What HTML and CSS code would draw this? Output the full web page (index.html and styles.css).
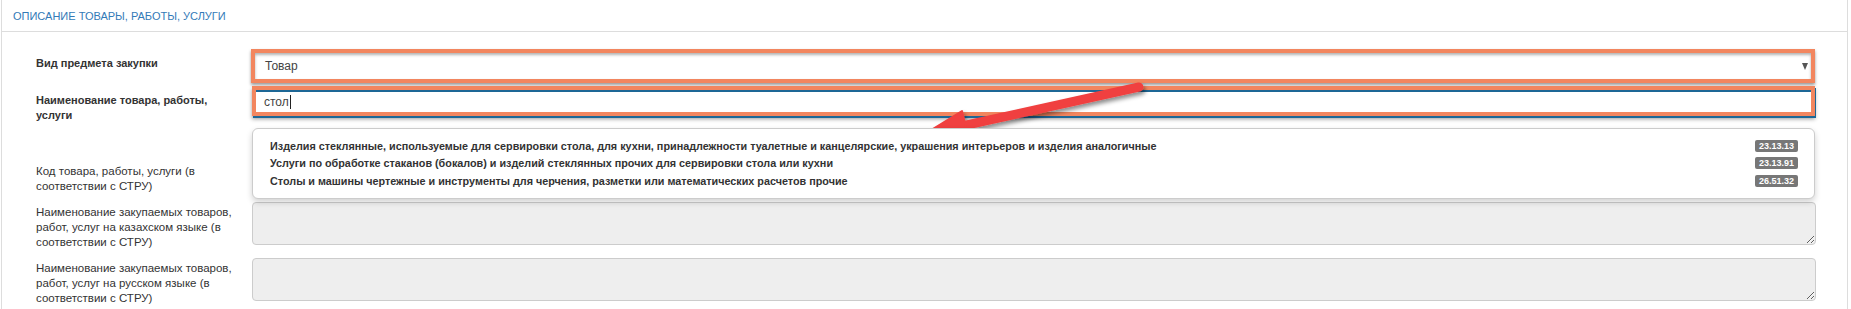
FILE: index.html
```html
<!doctype html>
<html lang="ru">
<head>
<meta charset="utf-8">
<title>Описание товары, работы, услуги</title>
<link rel="stylesheet" href="styles.css">
</head>
<body>
<div class="panel">
  <div class="panel-heading">ОПИСАНИЕ ТОВАРЫ, РАБОТЫ, УСЛУГИ</div>
  <div class="panel-body">

    <div class="form-row row-tight">
      <label class="field-label strong">Вид предмета закупки</label>
      <div class="field">
        <div class="mark">
          <div class="select-box"><span>Товар</span><span class="caret"></span></div>
        </div>
      </div>
    </div>

    <div class="form-row">
      <label class="field-label strong">Наименование товара, работы, услуги</label>
      <div class="field">
        <div class="mark mark-focus">
          <div class="text-input">стол<span class="cursor"></span></div>
        </div>
        <!-- autocomplete list -->
        <ul class="suggestions">
          <li><span>Изделия стеклянные, используемые для сервировки стола, для кухни, принадлежности туалетные и канцелярские, украшения интерьеров и изделия аналогичные</span><span class="badge">23.13.13</span></li>
          <li><span>Услуги по обработке стаканов (бокалов) и изделий стеклянных прочих для сервировки стола или кухни</span><span class="badge">23.13.91</span></li>
          <li><span>Столы и машины чертежные и инструменты для черчения, разметки или математических расчетов прочие</span><span class="badge">26.51.32</span></li>
        </ul>
      </div>
    </div>

    <div class="form-row">
      <label class="field-label label-low">Код товара, работы, услуги (в соответствии с СТРУ)</label>
      <div class="field"><input class="code-input" type="text"></div>
    </div>

    <div class="form-row">
      <label class="field-label label-area">Наименование закупаемых товаров, работ, услуг на казахском языке (в соответствии с СТРУ)</label>
      <div class="field"><textarea class="area" readonly></textarea></div>
    </div>

    <div class="form-row">
      <label class="field-label label-area">Наименование закупаемых товаров, работ, услуг на русском языке (в соответствии с СТРУ)</label>
      <div class="field"><textarea class="area" readonly></textarea></div>
    </div>

  </div>
</div>

<!-- screenshot annotation arrow -->
<svg class="annotation" width="1851" height="309" viewBox="0 0 1851 309">
  <defs>
    <filter id="shadow" x="-20%" y="-50%" width="140%" height="200%">
      <feDropShadow dx="2" dy="3" stdDeviation="2" flood-color="#000" flood-opacity="0.45"/>
    </filter>
  </defs>
  <g filter="url(#shadow)" fill="#f0403f" stroke="#f0403f">
    <line x1="1139" y1="87" x2="962" y2="126" stroke-width="9" stroke-linecap="round"/>
    <polygon points="923,135 962,111 969,140" stroke-width="2" stroke-linejoin="round"/>
  </g>
</svg>
</body>
</html>
```

FILE: styles.css
```css
html,body{margin:0;padding:0;background:#fff;font-family:"Liberation Sans",Arial,Helvetica,sans-serif;color:#333;}

.panel{
  margin:-1px 3px 0 1px;
  border:1px solid #ddd;
  min-height:320px;
}

.panel-heading{
  height:31px;
  line-height:32px;
  padding-left:11px;
  font-size:11px;
  color:#337ab7;
  border-bottom:1px solid #ddd;
}

.panel-body{padding:17px 32px 0 34px;}

/* label column + field column */
.form-row{
  display:grid;
  grid-template-columns:215px 1fr;
  align-items:start;
  margin-bottom:8px;
}
.row-tight{margin-bottom:3px;}

.field-label{
  font-size:11.5px;
  line-height:15px;
  padding:7px 12px 0 0;
}
.field-label.strong{font-weight:700;font-size:11px;}
.label-low{padding-top:33px;}
.label-area{padding-top:3px;}

.field{position:relative;}

/* orange highlight boxes from the screenshot tool */
.mark{
  border:4px solid #f2865f;
  box-shadow:0 2px 3px rgba(0,0,0,.4), inset 0 2px 3px rgba(0,0,0,.3);
  background:#fff;
}
.mark-focus{
  margin-left:1px;
  box-shadow:1px 2px 0 #1d6796, 0 3px 4px rgba(0,0,0,.4);
}

.select-box{
  display:flex;
  align-items:center;
  justify-content:space-between;
  height:26px;
  padding:0 3px 0 10px;
  font-size:12px;
  color:#444;
}
.caret{
  width:0;height:0;
  border-left:3.5px solid transparent;
  border-right:3.5px solid transparent;
  border-top:7px solid #555;
}

.text-input{
  display:flex;
  align-items:center;
  height:20px;
  padding:0 8px;
  border-top:2px solid #1d6796;
  font-size:12px;
  color:#444;
}
.cursor{width:1px;height:14px;background:#222;margin-left:1px;}

.code-input{
  width:130px;
  height:30px;
  margin:0 0 0 2px;
  border:1px solid #ccc;
  border-radius:4px;
  box-sizing:border-box;
}

.area{
  display:block;
  width:100%;
  height:43px;
  margin:0 0 0 1px;
  box-sizing:border-box;
  background:#eee;
  border:1px solid #ccc;
  border-radius:4px;
  resize:vertical;
}

/* autocomplete dropdown */
.suggestions{
  position:absolute;
  top:42px;
  left:1px;
  right:0;
  margin:0;
  padding:8px 0;
  list-style:none;
  background:#fff;
  border:1px solid #ccc;
  border-radius:6px;
  box-shadow:0 3px 6px rgba(0,0,0,.18);
  z-index:10;
}
.suggestions li{
  display:flex;
  justify-content:space-between;
  align-items:center;
  height:17.5px;
  padding:0 16px 0 17px;
  font-size:10.8px;
  font-weight:700;
  color:#333;
}
.badge{
  background:#777;
  color:#fff;
  font-size:9px;
  font-weight:700;
  line-height:12px;
  padding:0 4px;
  border-radius:2px;
  min-width:33px;
  text-align:center;
}

.annotation{position:absolute;top:0;left:0;pointer-events:none;}
```
